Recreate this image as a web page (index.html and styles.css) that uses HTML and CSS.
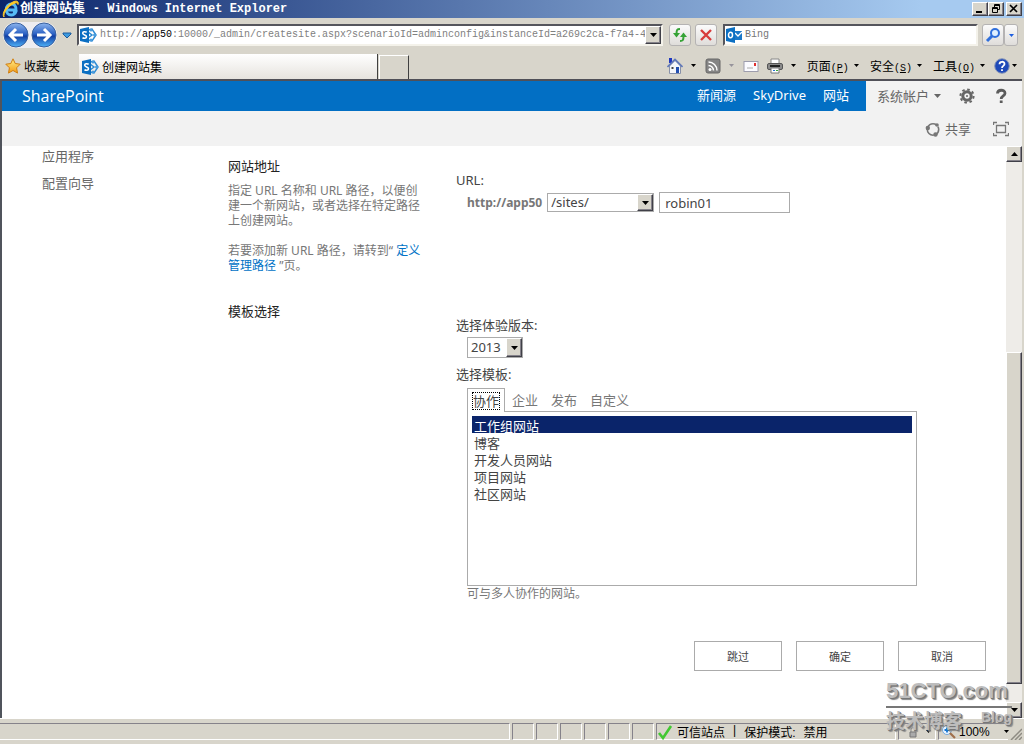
FILE: index.html
```html
<!DOCTYPE html>
<html lang="zh-CN">
<head>
<meta charset="utf-8">
<title>创建网站集</title>
<link rel="stylesheet" href="styles.css">
</head>
<body>
<svg class="defs" aria-hidden="true">
  <defs>
    <linearGradient id="ball" x1="0" y1="0" x2="0" y2="1"><stop offset="0" stop-color="#8db5ee"/><stop offset=".45" stop-color="#2c62c4"/><stop offset=".55" stop-color="#123fa4"/><stop offset="1" stop-color="#4fb4fa"/></linearGradient>
    <linearGradient id="gold" x1="0" y1="0" x2="0" y2="1"><stop offset="0" stop-color="#ffef8a"/><stop offset="1" stop-color="#f39a12"/></linearGradient>
    <symbol id="sp" viewBox="0 0 18 16">
      <path d="M9 3l4-1 4 6-4 6-4-1" fill="none" stroke="#2b8ad4" stroke-width="1.500"/><path d="M9 5l4 3-4 3" fill="none" stroke="#2b8ad4" stroke-width="1.500"/><circle cx="12" cy="3" r="1.500" fill="#4a9cdd"/><circle cx="15.500" cy="8" r="1.500" fill="#4a9cdd"/><circle cx="12" cy="13" r="1.500" fill="#4a9cdd"/>
      <path d="M1 2l9-2v16l-9-2z" fill="#0b6fc2"/><path d="M7.700 5.300C6 4.300 3.600 4.600 3.700 6.300c.1 1.900 3.800 1.400 3.800 3.400 0 1.800-2.500 1.900-4 1" fill="none" stroke="#fff" stroke-width="1.600"/>
    </symbol>
    <symbol id="down" viewBox="0 0 7 4"><path d="M0 0h7L3.500 4z" fill="currentColor"/></symbol>
    <symbol id="up" viewBox="0 0 7 4"><path d="M0 4h7L3.500 0z" fill="currentColor"/></symbol>
  </defs>
</svg>
<div class="window">
  <header class="titlebar">
    <svg class="ie" viewBox="0 0 18 18"><path d="M4.500 10h9.500c.3-4-1.800-6-4.700-6C6.400 4 4.200 6.300 4.200 9.500s2 5.500 5 5.500c2.300 0 4-1.200 4.700-3.200h-3" fill="none" stroke="#55b9f5" stroke-width="2.800"/><path d="M2 17C-1 14 5 4 12 1.500c3-1 5 0 4 3 0-2-2-2-4-1C6 6 1 13 2 17z" fill="#ffc928" stroke="#ffc928"/></svg>
    <h1 class="title">创建网站集 <span class="title-app">- Windows Internet Explorer</span></h1>
    <div class="window-buttons">
      <button class="bevel win-btn" aria-label="最小化"><svg viewBox="0 0 12 10"><path d="M2 8h6" stroke="#000" stroke-width="2"/></svg></button>
      <button class="bevel win-btn" aria-label="还原"><svg viewBox="0 0 12 10"><path d="M4.500 3V.5h5v5H8M2.500 3.500h5v5h-5zM4.500 1.500h5M2.500 4.500h5" fill="none" stroke="#000"/></svg></button>
      <button class="bevel win-btn win-close" aria-label="关闭"><svg viewBox="0 0 12 10"><path d="M2 1l7 7M9 1L2 8" stroke="#000" stroke-width="1.700"/></svg></button>
    </div>
  </header>

  <div class="address-row">
    <div class="history">
      <button class="plain" aria-label="后退"><svg class="nav-ball" viewBox="0 0 26 26"><circle cx="13" cy="13" r="12" fill="url(#ball)" stroke="#38609f"/><path d="M20 13H8M13 7l-6 6 6 6" fill="none" stroke="#fff" stroke-width="3"/></svg></button>
      <button class="plain" aria-label="前进"><svg class="nav-ball" viewBox="0 0 26 26"><circle cx="13" cy="13" r="12" fill="url(#ball)" stroke="#38609f"/><path d="M6 13h12M13 7l6 6-6 6" fill="none" stroke="#fff" stroke-width="3"/></svg></button>
    </div>
    <button class="plain recent" aria-label="最近的页面"><svg class="recent-arrow" viewBox="0 0 10 7"><path d="M1 1h8v1L5 6 1 2z" fill="#3d9be0" stroke="#1c5a9c"/></svg></button>
    <div class="sunken address">
      <svg class="sp-icon"><use href="#sp"/></svg>
      <a class="url" href="#">http://<span class="host">app50</span>:10000/_admin/createsite.aspx?scenarioId=adminconfig&amp;instanceId=a269c2ca-f7a4-4</a>
      <button class="bevel drop" aria-label="显示地址"><svg class="tri"><use href="#down"/></svg></button>
    </div>
    <button class="soft" aria-label="刷新"><svg class="i16" viewBox="0 0 16 16"><path d="M8 2C5 2 4.500 3 4.500 7" fill="none" stroke="#36a336" stroke-width="2"/><path d="M1 6h7L4.500 10.500z" fill="#36a336"/><path d="M8 14c3 0 3.500-1 3.500-5" fill="none" stroke="#36a336" stroke-width="2"/><path d="M8 10h7l-3.500-4.500z" fill="#36a336"/></svg></button>
    <button class="soft" aria-label="停止"><svg class="i16" viewBox="0 0 16 16"><path d="M3 3l10 10M13 3L3 13" stroke="#d83c3c" stroke-width="2.400"/></svg></button>
    <div class="sunken search">
      <svg class="outlook" viewBox="0 0 18 16"><path d="M9 4h8v9H9z" fill="#1a78c8"/><path d="M10 6l3 3 4-4" fill="none" stroke="#fff" stroke-width="1.300"/><path d="M1 2l9-2v16l-9-2z" fill="#0b6fc2"/><ellipse cx="5.500" cy="8" rx="2" ry="2.700" fill="none" stroke="#fff" stroke-width="1.500"/></svg>
      <input class="search-input" aria-label="搜索" placeholder="Bing">
    </div>
    <div class="search-go">
      <button class="soft" aria-label="搜索"><svg class="i16" viewBox="0 0 16 16"><circle cx="10" cy="6" r="4" fill="#dff0ff" stroke="#2f6fdc" stroke-width="2"/><path d="M7 9l-5 5" stroke="#2f6fdc" stroke-width="3"/></svg></button>
      <button class="soft narrow" aria-label="搜索选项"><svg class="tri-s blue"><use href="#down"/></svg></button>
    </div>
  </div>

  <div class="command-row">
    <button class="plain fav"><svg class="i16" viewBox="0 0 16 16"><path d="M8 .8l2.200 4.700 5 .7-3.600 3.600.9 5.300L8 12.500l-4.500 2.600.9-5.300L.8 6.200l5-.7z" fill="url(#gold)" stroke="#cf7d10"/></svg>收藏夹</button>
    <a class="tab" href="#"><svg class="sp-icon"><use href="#sp"/></svg>创建网站集</a>
    <button class="new-tab" aria-label="新选项卡"></button>
    <nav class="commands">
      <button class="plain cmd" aria-label="主页"><svg class="i16" viewBox="0 0 16 16"><path d="M2.500 8v7.500h11V8L8 2.500z" fill="#f4f6fb" stroke="#8790a8"/><path d="M2 0h3v5H2z" fill="#2038c0"/><path d="M.5 9L8 1.500 15.500 9" fill="none" stroke="#5f77b8" stroke-width="1.600"/><path d="M9 9h3v6H9z" fill="#214eb0"/><path d="M4.500 9h2v2h-2z" fill="#444"/></svg><svg class="tri-s"><use href="#down"/></svg></button>
      <button class="plain cmd" aria-label="源"><svg class="i16" viewBox="0 0 16 16"><rect x="1" y="1" width="14" height="14" rx="2" fill="#858585" stroke="#666"/><circle cx="5" cy="11.500" r="1.500" fill="#fff"/><path d="M3.500 7.500a5 5 0 0 1 5 5M3.500 4a8.500 8.500 0 0 1 8.500 8.500" fill="none" stroke="#fff" stroke-width="1.500"/></svg><svg class="tri-s dim"><use href="#down"/></svg></button>
      <button class="plain cmd mail" aria-label="阅读邮件"><svg class="i16" viewBox="0 0 16 16"><rect x="1" y="3.500" width="14" height="10" fill="#fbfbff" stroke="#9d9dad"/><path d="M11 5h2v3h-2z" fill="#e03030"/><path d="M4 10h6" stroke="#aaa"/></svg></button>
      <button class="plain cmd" aria-label="打印"><svg class="i16" viewBox="0 0 16 16"><path d="M4 1h8v5H4z" fill="#fff" stroke="#888"/><rect x=".5" y="5.500" width="15" height="6" rx="1.500" fill="#8b8b8b" stroke="#555"/><path d="M3 8h10" stroke="#222" stroke-width="2"/><path d="M4 10h8v5H4z" fill="#fff" stroke="#777"/><path d="M6 12h2v1H6z" fill="#2673d8"/><path d="M9 12h2v1H9z" fill="#38a838"/></svg><svg class="tri-s"><use href="#down"/></svg></button>
      <button class="plain cmd menu"><span>页面<span class="key">(<u>P</u>)</span></span><svg class="tri-s"><use href="#down"/></svg></button>
      <button class="plain cmd menu"><span>安全<span class="key">(<u>S</u>)</span></span><svg class="tri-s"><use href="#down"/></svg></button>
      <button class="plain cmd menu"><span>工具<span class="key">(<u>O</u>)</span></span><svg class="tri-s"><use href="#down"/></svg></button>
      <button class="plain cmd help" aria-label="帮助"><svg class="i16" viewBox="0 0 16 16"><circle cx="8" cy="8" r="7.300" fill="#1e49b8" stroke="#8a98b8"/><path d="M5.500 6.200C5.500 3 10.500 3 10.500 6 10.500 8 8 7.800 8 10M8 11.300v1.700" fill="none" stroke="#fff" stroke-width="1.800"/></svg><svg class="tri-s"><use href="#down"/></svg></button>
    </nav>
  </div>

  <div class="page">
    <div class="suite">
      <a class="brand" href="#">SharePoint</a>
      <nav class="suite-links">
        <a href="#">新闻源</a><a href="#">SkyDrive</a><a class="current" href="#">网站</a>
      </nav>
      <div class="suite-tools">
        <button class="plain account">系统帐户<svg class="tri-s"><use href="#down"/></svg></button>
        <button class="plain" aria-label="设置"><svg class="i16" viewBox="0 0 16 16"><circle cx="8" cy="8" r="4.200" fill="none" stroke="#666" stroke-width="3"/><circle cx="8" cy="8" r="6.600" fill="none" stroke="#666" stroke-width="2" stroke-dasharray="2.600 2.580"/><circle cx="8" cy="8" r="1" fill="#666"/></svg></button>
        <button class="plain" aria-label="帮助"><svg class="i16" viewBox="0 0 16 16"><path d="M4.500 5.500C4.500 1.200 12 1.200 12 5.200 12 8 8.200 7.800 8.200 11M8.200 12.500v2.600" fill="none" stroke="#5c5c5c" stroke-width="2.800"/></svg></button>
      </div>
    </div>
    <div class="ribbon">
      <button class="plain share"><svg class="i16" viewBox="0 0 16 16"><circle cx="8" cy="8.500" r="5.700" fill="none" stroke="#777" stroke-width="1.600" stroke-dasharray="10 1.940" stroke-dashoffset="4"/><circle cx="2.800" cy="7" r="2.200" fill="#777"/><circle cx="12" cy="4" r="1.800" fill="#777"/><circle cx="10.500" cy="13.500" r="2.200" fill="#777"/></svg>共享</button>
      <button class="plain" aria-label="专注于内容"><svg class="i16" viewBox="0 0 16 16"><path d="M.5 4V1.500H4M12 1.500h3.500V4M15.500 12v2.500H12M4 14.500H.5V12M3.500 4.500h9v7h-9z" fill="none" stroke="#777" stroke-width="1.300"/></svg></button>
    </div>

    <div class="body">
      <nav class="side">
        <a href="#">应用程序</a>
        <a href="#">配置向导</a>
      </nav>
      <form class="form">
        <section class="row address-section">
          <div class="intro">
            <h2>网站地址</h2>
            <p>指定 URL 名称和 URL 路径，以便创建一个新网站，或者选择在特定路径上创建网站。</p>
            <p>若要添加新 URL 路径，请转到“ <a href="#">定义管理路径</a> ”页。</p>
          </div>
          <div class="fields">
            <label for="site">URL:</label>
            <div class="url-line">
              <strong>http://app50</strong>
              <span class="select path"><select aria-label="路径"><option>/sites/</option></select><span class="bevel arrow"><svg class="tri"><use href="#down"/></svg></span></span>
              <input class="site-input" id="site" type="text" value="robin01">
            </div>
          </div>
        </section>
        <section class="row">
          <div class="intro"><h2>模板选择</h2></div>
          <div class="fields template-fields">
            <label for="version">选择体验版本:</label>
            <span class="select version"><select id="version"><option>2013</option></select><span class="bevel arrow"><svg class="tri"><use href="#down"/></svg></span></span>
            <label for="template">选择模板:</label>
            <div class="template">
              <div class="tabs">
                <button type="button" class="plain active"><span>协作</span></button>
                <button type="button" class="plain">企业</button>
                <button type="button" class="plain">发布</button>
                <button type="button" class="plain">自定义</button>
              </div>
              <select class="list" id="template" size="10">
                <option selected>工作组网站</option>
                <option>博客</option>
                <option>开发人员网站</option>
                <option>项目网站</option>
                <option>社区网站</option>
              </select>
              <p class="hint">可与多人协作的网站。</p>
            </div>
          </div>
        </section>
        <div class="actions">
          <button type="button">跳过</button>
          <button type="button">确定</button>
          <button type="button">取消</button>
        </div>
      </form>
      <div class="scroll">
        <button class="bevel scroll-btn" aria-label="向上滚动"><svg class="tri"><use href="#up"/></svg></button>
        <div class="track"><div class="bevel thumb"></div></div>
        <button class="bevel scroll-btn" aria-label="向下滚动"><svg class="tri"><use href="#down"/></svg></button>
      </div>
    </div>
  </div>

  <footer class="status">
    <div class="pane message"></div>
    <div class="pane"></div><div class="pane"></div><div class="pane"></div><div class="pane"></div><div class="pane"></div><div class="pane"></div>
    <div class="pane zone"><svg class="i16" viewBox="0 0 16 16"><path d="M2 9l4 5 8-12" fill="none" stroke="#42c832" stroke-width="2.600"/></svg><div class="zone-text"><span>可信站点</span><span>|</span><span>保护模式:</span><span>禁用</span></div></div>
    <div class="pane lock"><svg class="lock-icon" viewBox="0 0 8 12"><path d="M2 6V3q2-3 4 0v3" fill="none" stroke="#888"/><path d="M1 6h6v5H1z" fill="#aaa" stroke="#777"/></svg><svg class="tri-s"><use href="#down"/></svg></div>
    <div class="pane zoom"><svg class="i16" viewBox="0 0 16 16"><circle cx="6" cy="6" r="4.500" fill="#eaf5ff" stroke="#76a9dc"/><path d="M3.500 6h5M6 3.500v5" stroke="#1474d4" stroke-width="1.800"/><path d="M9 9l5 5" stroke="#a0704c" stroke-width="2.200"/></svg>100%<svg class="tri-s"><use href="#down"/></svg></div>
    <svg class="grip" viewBox="0 0 12 12"><path d="M1 12L12 1M5 12l7-7M9 12l3-3" stroke="#8e8b83" stroke-width="1.500"/></svg>
  </footer>
  <div class="watermark"><div class="wm-top">51CTO.com</div><div class="wm-bottom"><span>技术博客</span><small>Blog</small></div></div>
</div>
</body>
</html>
```
FILE: styles.css
```css
* { box-sizing: border-box; }
body {
  margin: 0;
  font-family: "Noto Sans", "Noto Sans CJK SC", sans-serif;
  font-size: 13px;
  color: #444;
}
button, input, select { font: inherit; color: inherit; margin: 0; }
a { color: inherit; text-decoration: none; }
h1, h2, p { margin: 0; font-weight: normal; }
svg { display: block; flex: none; }
.defs { position: absolute; width: 0; height: 0; }
.window {
  position: relative;
  display: flex;
  flex-direction: column;
  min-height: 100vh;
  background: #d8d5cb;
}
.plain {
  display: flex;
  align-items: center;
  padding: 0;
  border: 0;
  background: none;
}
.bevel {
  display: flex;
  align-items: center;
  justify-content: center;
  padding: 0;
  background: #d8d5cb;
  border: 1px solid;
  border-color: #fff #404048 #404048 #fff;
  box-shadow: inset -1px -1px #85828a;
  color: #000;
}
.i16 { width: 16px; height: 16px; }
.tri { width: 7px; height: 4px; }
.tri-s { width: 5px; height: 3px; }
.blue { color: #1d5ee0; }
.dim { color: #96939b; }

.titlebar {
  display: flex;
  align-items: center;
  height: 18px;
  padding: 0 2px;
  background: linear-gradient(90deg, #0a246a, #a6caf0 90%);
  color: #fff;
}
.ie { width: 18px; height: 18px; }
.title {
  flex: 1;
  font: bold 13px/18px "Liberation Mono", "Noto Sans CJK SC", monospace;
  white-space: nowrap;
}
.title-app { font-size: 12px; }
.window-buttons { display: flex; }
.win-btn { width: 16px; height: 14px; }
.win-btn svg { width: 12px; height: 10px; }
.win-close { margin-left: 2px; }

.address-row {
  display: flex;
  align-items: center;
  height: 34px;
  padding: 0 6px 0 3px;
  gap: 4px;
}
.history {
  display: flex;
  gap: 2px;
  border-radius: 13px;
  background: #eeedf0;
}
.nav-ball { width: 26px; height: 26px; }
.recent { margin: 0 1px; }
.recent-arrow { width: 10px; height: 7px; }
.sunken {
  display: flex;
  align-items: center;
  height: 22px;
  background: #fff;
  border: 2px solid;
  border-color: #55555c #f4f2ea #f4f2ea #55555c;
}
.address { flex: 1; min-width: 0; }
.sp-icon { width: 18px; height: 16px; }
.url {
  flex: 1;
  padding-left: 3px;
  overflow: hidden;
  color: #808080;
  font: 10px/18px "Liberation Mono", monospace;
  white-space: nowrap;
}
.host { color: #000; }
.drop { width: 16px; height: 18px; }
.soft {
  display: flex;
  align-items: center;
  justify-content: center;
  width: 22px;
  height: 22px;
  padding: 0;
  border: 1px solid #b5b3b3;
  border-radius: 3px;
  background: linear-gradient(#fbfbfb, #dfddda);
}
.address + .soft, .search { margin-left: 2px; }
.search { width: 255px; }
.outlook { width: 18px; height: 16px; }
.search-input {
  flex: 1;
  min-width: 0;
  padding: 0 2px;
  border: 0;
  outline: 0;
  background: none;
  font: 10px/18px "Liberation Mono", monospace;
}
.search-input::placeholder { color: #777; opacity: 1; }
.search-go { display: flex; }
.narrow { width: 14px; }

.command-row {
  display: flex;
  align-items: stretch;
  height: 27px;
  padding-left: 5px;
  font-family: "Liberation Sans", "Noto Sans CJK SC", sans-serif;
  font-size: 12px;
  color: #000;
}
.fav { width: 74px; gap: 3px; }
.tab {
  display: flex;
  align-items: center;
  gap: 3px;
  width: 299px;
  margin-top: 2px;
  padding-left: 2px;
  background: linear-gradient(#fff, #e6e3de);
  border-right: 1px solid #404040;
}
.new-tab {
  width: 30px;
  margin: 3px 0 0 1px;
  background: none;
  border: 1px solid #fff;
  border-right-color: #404040;
  border-bottom: 0;
}
.commands {
  display: flex;
  flex: 1;
  justify-content: flex-end;
  gap: 9px;
  padding-right: 7px;
}
.cmd { gap: 8px; white-space: nowrap; }
.menu { gap: 5px; margin-left: 2px; }
.key { font: 10px "Liberation Mono", monospace; }
.mail { margin-right: -1px; }
.help { gap: 2px; }

.page {
  display: flex;
  flex: 1;
  flex-direction: column;
  margin-right: 2px;
  border-top: 2px solid #505058;
  border-left: 2px solid #50545c;
  background: #fff;
}
.suite {
  display: flex;
  height: 30px;
  background: #026fc4;
  color: #fff;
}
.brand {
  flex: 1;
  padding-left: 20px;
  font: 16px/30px "Open Sans", sans-serif;
}
.suite-links { display: flex; gap: 17px; padding-right: 17px; line-height: 28px; }
.current { position: relative; }
.current::after {
  content: "";
  position: absolute;
  bottom: 0;
  left: 50%;
  margin-left: -3px;
  border: 3px solid transparent;
  border-top: 0;
  border-bottom-color: #f2f2f2;
}
.suite-tools {
  display: flex;
  align-items: center;
  gap: 18px;
  padding: 0 13px 0 11px;
  background: #f2f2f2;
  color: #666;
}
.account { gap: 5px; line-height: 28px; }
.account .tri-s { width: 7px; height: 4px; }
.ribbon {
  display: flex;
  align-items: center;
  justify-content: flex-end;
  gap: 22px;
  height: 35px;
  padding-right: 13px;
  background: #f2f2f2;
  color: #666;
}
.share { gap: 4px; }
.body { display: flex; flex: 1; }
.side {
  display: flex;
  flex-direction: column;
  gap: 7px;
  width: 226px;
  padding: 0 40px;
  line-height: 20px;
  color: #666;
}
.form { flex: 1; padding: 9px 20px 0 0; }
.row { display: grid; grid-template-columns: 228px 1fr; }
.address-section { min-height: 145px; }
.intro { width: 200px; color: #777; font-size: 12px; line-height: 15px; }
.intro h2 { margin-bottom: 6px; font-size: 13px; line-height: 22px; color: #222; }
.intro p { margin-bottom: 15px; }
.intro a { color: #0072c6; }
.fields { padding-top: 15px; line-height: 20px; }
.fields label { display: block; }
.url-line {
  display: flex;
  align-items: center;
  gap: 5px;
  padding: 2px 0 0 11px;
}
.url-line strong { color: #777; font-size: 12px; }
.select {
  display: flex;
  border: 1px solid #ababab;
}
.select select {
  flex: 1;
  min-width: 0;
  padding: 0 3px;
  border: 0;
  appearance: none;
  background: #fff;
  line-height: 17px;
}
.arrow { width: 16px; }
.path { width: 107px; height: 19px; }
.version { width: 56px; height: 21px; margin: 2px 0 6px 11px; }
.site-input {
  width: 131px;
  height: 21px;
  padding: 0 5px;
  border: 1px solid #ababab;
}
.template { width: 450px; margin: 4px 0 0 11px; }
.tabs { display: flex; height: 24px; margin-bottom: -1px; }
.tabs button { padding: 0 6px 0 7px; color: #777; }
.tabs .active {
  position: relative;
  padding: 0 5px;
  border: 1px solid #ababab;
  border-bottom: 0;
  background: #fff;
  color: #444;
}
.active span { outline: 1px dotted #000; line-height: 16px; }
.list {
  display: block;
  width: 100%;
  height: 175px;
  padding: 4px;
  border: 1px solid #ababab;
  border-radius: 0;
  outline: 0;
  overflow: hidden;
  background: #fff;
}
.list option { height: 17px; min-height: 17px; padding: 0 2px; line-height: 14px; }
.list option:checked { background: #0a246a linear-gradient(#0a246a, #0a246a); color: #fff; -webkit-text-fill-color: #fff; }
.hint { color: #777; font-size: 12px; line-height: 16px; }
.actions {
  display: flex;
  justify-content: flex-end;
  gap: 14px;
  padding-top: 39px;
}
.actions button {
  width: 88px;
  height: 30px;
  border: 1px solid #ababab;
  background: #fff;
  font-size: 11px;
}
.scroll { display: flex; flex-direction: column; width: 16px; }
.scroll-btn { height: 16px; }
.track {
  display: grid;
  flex: 1;
  grid-template-rows: 190fr 332fr 18fr;
  background: #eeece8;
}
.thumb { grid-row: 2; }

.status {
  display: flex;
  align-items: stretch;
  height: 26px;
  padding: 4px 2px 4px 0;
  border-top: 1px solid #fff;
  color: #000;
  font: 12px "Liberation Sans", "Noto Sans CJK SC", sans-serif;
}
.pane {
  display: flex;
  align-items: center;
  width: 22px;
  margin-right: 2px;
  border: 1px solid;
  border-color: #85828a #fff #fff #85828a;
  white-space: nowrap;
}
.message { flex: 1; border-left: 0; }
.zone { width: 240px; gap: 4px; }
.zone-text { display: flex; gap: 8px; }
.lock { width: 38px; gap: 9px; padding-left: 10px; }
.lock-icon { width: 8px; height: 12px; }
.zoom { width: 70px; gap: 2px; padding-left: 2px; border-right: 0; }
.zoom .tri-s { margin-left: 12px; }
.grip { width: 12px; height: 12px; align-self: flex-end; }

.watermark {
  position: absolute;
  right: 12px;
  bottom: 10px;
  width: 126px;
  color: #bdbdbd;
  text-shadow: 1px 1px #777, 2px 2px 1px #888;
  font-weight: bold;
  pointer-events: none;
}
.wm-top {
  border-bottom: 2px solid #777;
  font: bold 22px/30px "Liberation Sans", sans-serif;
}
.wm-bottom { display: flex; justify-content: space-between; font-size: 19px; line-height: 26px; }
.wm-bottom small { font: bold 14px/18px "Liberation Sans", sans-serif; }
```
